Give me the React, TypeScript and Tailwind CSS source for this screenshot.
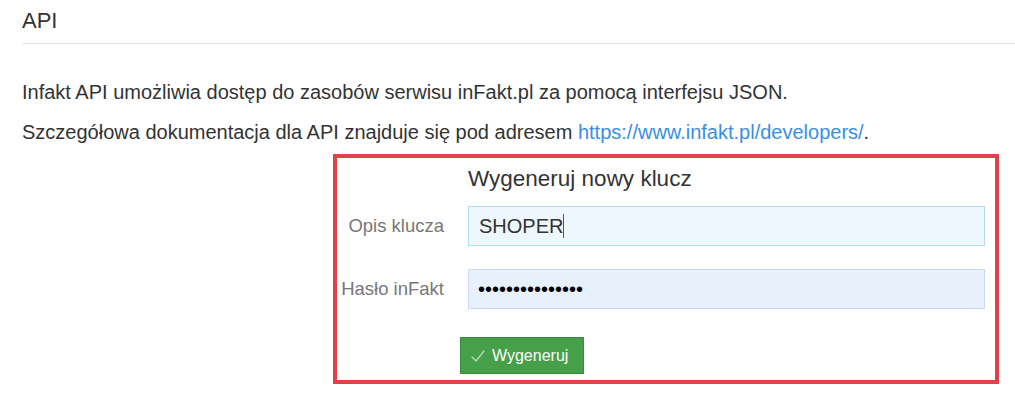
import React from "react";

const Field = ({
  label,
  children,
}: {
  label: string;
  children: React.ReactNode;
}) => {
  return (
    <div className="grid grid-cols-[107px_1fr] items-center gap-x-6">
      <label className="text-right text-[18.5px] leading-none text-[#777]">
        {label}
      </label>
      {children}
    </div>
  );
};

export default function App() {
  return (
    <div className="h-[395px] w-[1015px] overflow-hidden bg-white pl-[22px] font-['Liberation_Sans',Arial,sans-serif] text-[#333]">
      <h3 className="pt-[9px] pb-[10px] text-[22px] leading-[24px]">API</h3>
      <div className="border-b border-[#e6e6e6]" />

      <p className="mt-[36px] text-[20px] leading-[24px]">
        Infakt API umożliwia dostęp do zasobów serwisu inFakt.pl za pomocą
        interfejsu JSON.
      </p>
      <p className="mt-[16px] text-[20px] leading-[24px]">
        Szczegółowa dokumentacja dla API znajduje się pod adresem{" "}
        <a href="#" className="text-[#3a8ee4]">
          https://www.infakt.pl/developers/
        </a>
        .
      </p>

      <div className="mt-[10px] ml-[311px] h-[230px] w-[666px] border-[4px] border-[#e1424a] pr-[10px]">
        <div className="grid grid-cols-[107px_1fr] gap-x-6">
          <div />
          <h4 className="pt-[8px] text-[22.5px] leading-[26px] text-[#333]">
            Wygeneruj nowy klucz
          </h4>
        </div>

        <div className="mt-[14px] flex flex-col gap-[23px]">
          <Field label="Opis klucza">
            <div className="flex h-[40px] items-center border border-[#b2daf3] bg-[#eef7fe] px-[10px] text-[20px] text-[#333]">
              SHOPER
              <span className="h-[24px] w-px bg-[#555]" />
            </div>
          </Field>
          <Field label="Hasło inFakt">
            <input
              type="password"
              readOnly
              defaultValue="shoper123456789"
              className="h-[40px] w-full border border-[#c9dbef] bg-[#e8f0fc] px-[9px] text-[20px] text-black outline-none"
            />
          </Field>
        </div>

        <div className="mt-[28px] grid grid-cols-[107px_1fr] gap-x-6">
          <div />
          <button className="-ml-[8px] flex h-[37px] w-[124px] items-center gap-[6px] border border-[#3b8c3f] bg-[#45a049] pl-[9px] text-[16px] text-white">
            <svg
              width="16"
              height="14"
              viewBox="0 0 16 14"
              fill="none"
              stroke="#b9dcb9"
              strokeWidth="1.3"
              strokeLinecap="round"
            >
              <path d="M2 8 L6 12 L14 2" />
            </svg>
            Wygeneruj
          </button>
        </div>
      </div>
    </div>
  );
}
